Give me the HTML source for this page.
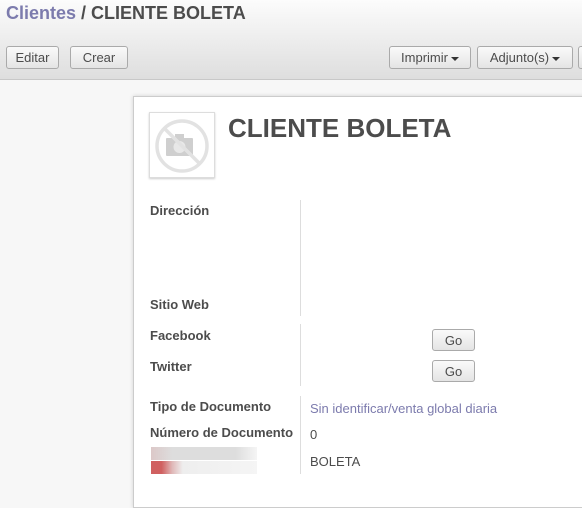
<!DOCTYPE html><html><head><style>
body{margin:0;width:582px;height:494px;overflow:hidden;font-family:"Liberation Sans",sans-serif;font-size:13px;color:#4c4c4c;background:#f7f7f7;position:relative}
.hdr{position:absolute;left:0;top:0;width:582px;height:79px;background:linear-gradient(#fcfcfc,#dedede);border-bottom:1px solid #c8c8c8}
.bc{position:absolute;left:6px;top:3px;font-size:18px;font-weight:bold;color:#4c4c4c}
.bc span{color:#7c7bad}
.btn{position:absolute;top:46px;height:23px;border:1px solid #aaa;border-radius:3px;background:linear-gradient(#fafafa,#e4e4e4);font-size:13px;color:#4c4c4c;line-height:22px;text-align:center;box-sizing:border-box}
.car{display:inline-block;border-left:4px solid transparent;border-right:4px solid transparent;border-top:4px solid #333;vertical-align:middle;margin-left:3px}
.sheet{position:absolute;left:133px;top:96px;width:460px;height:410px;background:#fff;border:1px solid #ccc;box-shadow:0 0 4px rgba(0,0,0,.15)}
.lb{position:absolute;left:150px;font-weight:bold;font-size:13px;color:#4c4c4c}
.v{position:absolute;left:310px;font-size:13px}
.vl{position:absolute;left:300px;width:1px;background:#ddd}
.go{position:absolute;left:432px;width:43px;height:22px;border:1px solid #aaa;border-radius:3px;background:linear-gradient(#fafafa,#e4e4e4);text-align:center;line-height:22px;box-sizing:border-box}
</style></head><body>
<div class="hdr"></div>
<div class="bc"><span>Clientes</span> / CLIENTE BOLETA</div>
<div class="btn" style="left:6px;width:53px">Editar</div>
<div class="btn" style="left:70px;width:58px">Crear</div>
<div class="btn" style="left:389px;width:82px">Imprimir<span class="car"></span></div>
<div class="btn" style="left:477px;width:96px">Adjunto(s)<span class="car"></span></div>
<div class="btn" style="left:578px;width:10px"></div>
<div class="sheet"></div>
<div style="position:absolute;left:149px;top:112px;width:64px;height:64px;border:1px solid #ddd;box-shadow:0 1px 2px rgba(0,0,0,.2);background:#fff">
<svg width="64" height="64" viewBox="0 0 64 64"><circle cx="32" cy="33" r="25" fill="none" stroke="#e2e2e2" stroke-width="3.5"/><rect x="16" y="25" width="27" height="18" rx="1" fill="#cfcfcf"/><rect x="25" y="21" width="9" height="5" fill="#cfcfcf"/><circle cx="29.5" cy="34" r="6" fill="#e8e8e8"/><line x1="15" y1="16" x2="49" y2="50" stroke="#e2e2e2" stroke-width="3.5"/></svg></div>
<div style="position:absolute;left:228px;top:113px;font-size:26px;font-weight:bold;color:#4c4c4c">CLIENTE BOLETA</div>
<div class="vl" style="top:200px;height:116px"></div>
<div class="vl" style="top:324px;height:62px"></div>
<div class="vl" style="top:396px;height:78px"></div>
<div class="lb" style="top:203px">Dirección</div>
<div class="lb" style="top:297px">Sitio Web</div>
<div class="lb" style="top:328px">Facebook</div>
<div class="lb" style="top:359px">Twitter</div>
<div class="go" style="top:329px">Go</div>
<div class="go" style="top:360px">Go</div>
<div class="lb" style="top:399px">Tipo de Documento</div>
<div class="v" style="top:401px;color:#7c7bad">Sin identificar/venta global diaria</div>
<div class="lb" style="top:425px">Número de Documento</div>
<div class="v" style="top:427px">0</div>
<div style="position:absolute;left:151px;top:447px;width:106px;height:13px;background:linear-gradient(90deg,#dcc8c8,#ddd 20%,#ddd 80%,#f5f5f5)"></div>
<div style="position:absolute;left:151px;top:461px;width:106px;height:13px;background:linear-gradient(90deg,#d06060 10%,#e0b8b8 20%,#eee 30%,#f5f5f5)"></div>
<div class="v" style="top:454px">BOLETA</div>
</body></html>
